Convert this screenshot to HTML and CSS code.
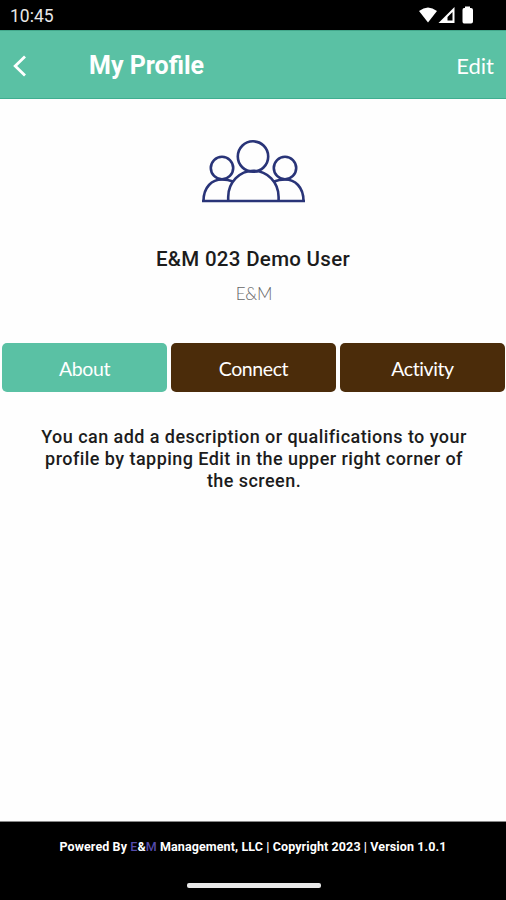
FILE: index.html
```html
<!DOCTYPE html>
<html lang="en">
<head>
    <meta charset="UTF-8">
    <meta name="viewport" content="width=device-width, initial-scale=1.0">
    <title>My Profile</title>
    <link rel="stylesheet" href="styles.css">
</head>
<body>

    <div class="status-bar">
        <span class="time">10:45</span>
        <svg class="status-icons" width="56" height="18" viewBox="0 0 56 18" fill="#fff">
            <path d="M0 5 Q9 -2 18 5 L9 16.500 Z"/>
            <path d="M19.500 17 L35.500 1 V17 Z M28.500 14.500 H33.500 V6 L28.500 11 Z" fill-rule="evenodd"/>
            <path d="M46 0.500 H51 V2 H52 Q54 2 54 4 V15.500 Q54 17.500 52 17.500 H45 Q43.500 17.500 43.500 15.500 V4 Q43.500 2 45 2 H46 Z"/>
        </svg>
    </div>

    <header class="header">
        <a class="back" href="#" aria-label="Back">
            <svg width="14" height="22" viewBox="0 0 14 22" fill="none" stroke="#fff" stroke-width="2.8">
                <path d="M12 1.500 L2.200 11 L12 20.500"/>
            </svg>
        </a>
        <h1>My Profile</h1>
        <a class="edit" href="#">Edit</a>
    </header>

    <main class="profile">
        <svg class="avatar" width="106" height="66" viewBox="0 0 106 66" fill="none" stroke="#293478" stroke-width="2.600">
            <circle cx="53" cy="17.500" r="15.200"/>
            <circle cx="22" cy="29" r="11.200"/>
            <circle cx="85" cy="29" r="11.200"/>
            <path d="M28.200 62 V58 A25 26 0 0 1 78.600 58 V62"/>
            <path d="M3.500 62 C3.500 48 12 40.500 22 40.500 Q28 40.500 33 42.500"/>
            <path d="M103.500 62 C103.500 48 95 40.500 85 40.500 Q79 40.500 74 42.500"/>
            <path d="M2 62 H105"/>
        </svg>
        <h2>E&amp;M 023 Demo User</h2>
        <p class="company">E&amp;M</p>

        <nav class="tabs">
            <button class="tab active">About</button>
            <button class="tab">Connect</button>
            <button class="tab">Activity</button>
        </nav>

        <p class="description">You can add a description or qualifications to your<br>profile by tapping Edit in the upper right corner of<br>the screen.</p>
    </main>

    <footer class="footer">
        <p>Powered By <span class="brand">E</span>&amp;<span class="brand">M</span> Management, LLC | Copyright 2023 | Version 1.0.1</p>
        <div class="home-bar"></div>
    </footer>

</body>
</html>
```

FILE: styles.css
```css
* {
    box-sizing: border-box;
}

body {
    display: flex;
    flex-direction: column;
    height: 100vh;
    margin: 0;
    overflow: hidden;
    background-color: #fefefe;
    color: #1c1c1c;
    font-family: Roboto, sans-serif;
}

h1, h2, p {
    margin: 0;
    white-space: nowrap;
}

a {
    color: #fff;
    text-decoration: none;
}

.status-bar {
    display: flex;
    justify-content: space-between;
    height: 30px;
    padding: 6px 31px 0 10px;
    background-color: #000;
    color: #e8e8e8;
}

.time {
    font-size: 17.5px;
    line-height: 21px;
}

.header {
    display: flex;
    align-items: center;
    height: 69px;
    padding: 3px 12px 0 13px;
    background-color: #5ac1a4;
    border-top: 1px solid #43a88c;
    border-bottom: 1px solid #3fae90;
    color: #fff;
}

.back {
    display: flex;
    width: 76px;
}

.header h1 {
    flex: 1;
    font-size: 25px;
    font-weight: 700;
    line-height: 30px;
}

.edit {
    font-family: Lato, sans-serif;
    font-size: 22px;
    line-height: 28px;
}

.profile {
    flex: 1;
    display: flex;
    flex-direction: column;
    align-items: center;
    padding-top: 40px;
}

.avatar {
    display: block;
}

.profile h2 {
    margin-top: 41px;
    font-size: 20.5px;
    font-weight: 500;
    letter-spacing: 0.3px;
    line-height: 26px;
}

.company {
    margin-top: 11px;
    padding-left: 2px;
    color: #666;
    font-family: Lato, sans-serif;
    font-size: 17px;
    font-weight: 300;
    letter-spacing: -0.2px;
    line-height: 22px;
}

.tabs {
    display: flex;
    gap: 4px;
    width: 100%;
    margin-top: 38px;
    padding: 0 1px 0 2px;
}

.tab {
    flex: 1;
    height: 49px;
    padding: 2px 0 0;
    border: none;
    border-radius: 5px;
    background-color: #4b2c0a;
    color: #fff;
    font-family: Lato, sans-serif;
    font-size: 19.5px;
    letter-spacing: -0.4px;
    cursor: pointer;
}

.tab.active {
    background-color: #5ac1a4;
}

.description {
    margin-top: 34px;
    padding-left: 2px;
    font-size: 18px;
    font-weight: 500;
    letter-spacing: 0.45px;
    line-height: 22px;
    text-align: center;
}

.footer {
    display: flex;
    flex-direction: column;
    align-items: center;
    height: 79px;
    padding-top: 17px;
    border-top: 1px solid #888;
    background-color: #000;
    color: #fff;
}

.footer p {
    font-size: 12.5px;
    font-weight: 700;
    letter-spacing: 0.1px;
    line-height: 16px;
}

.brand {
    color: #554bab;
    font-weight: 500;
}

.home-bar {
    width: 134px;
    height: 5px;
    margin: 28px 0 0 1px;
    border-radius: 2px;
    background-color: #e8e8e8;
}
```
